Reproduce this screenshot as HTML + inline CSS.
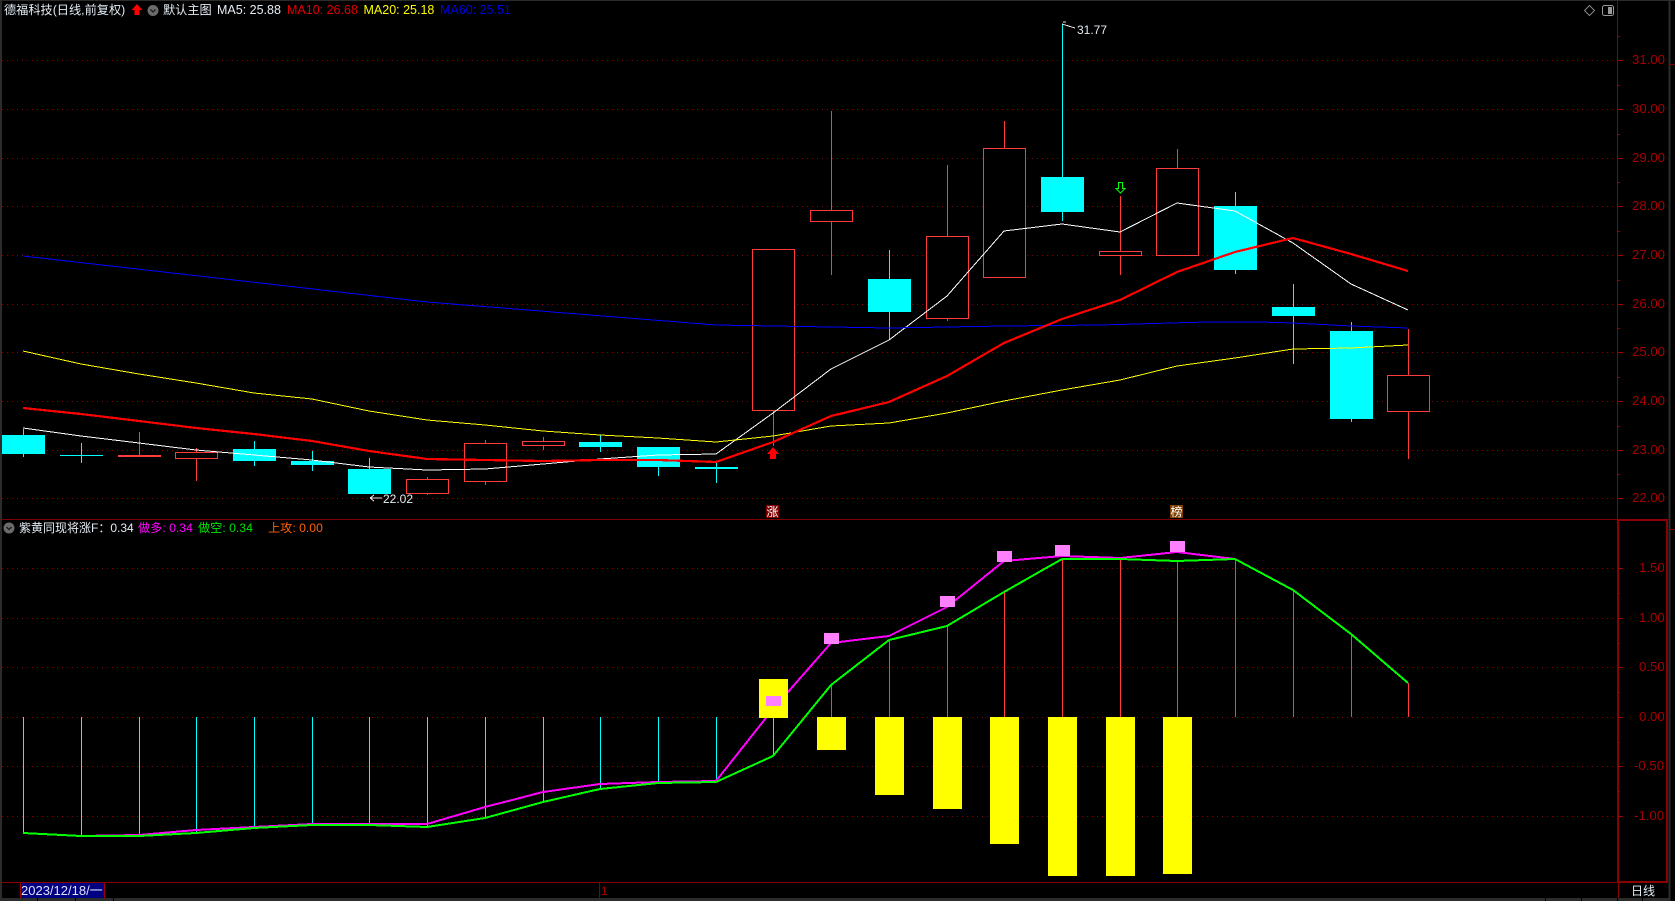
<!DOCTYPE html>
<html><head><meta charset="utf-8"><title>德福科技</title>
<style>
html,body{margin:0;padding:0;background:#000;width:1675px;height:901px;overflow:hidden}
svg{display:block}
text{font-family:"Liberation Sans","Noto Sans CJK SC",sans-serif;font-size:12px}
.ax{font-size:13.2px;fill:#a80000}
.w{fill:#e4edf4}
.h{font-size:12.5px}
</style></head><body>
<svg width="1675" height="901" viewBox="0 0 1675 901" xmlns="http://www.w3.org/2000/svg">
<rect width="1675" height="901" fill="#000"/>
<g shape-rendering="crispEdges" fill="none">
<!-- window edges -->
<path d="M0 0.5H1675" stroke="#2c2c2c"/>
<path d="M1 0V901" stroke="#2c2c2c" stroke-width="2"/>
<path d="M1669.5 0V901" stroke="#2c2c2c" stroke-width="2"/>
<path d="M0 899.5H1670" stroke="#2c2c2c" stroke-width="3"/>
<path d="M37.5 898V901M75.5 898V901M113.5 898V901M1545.5 898V901M1581.5 898V901M1617.5 898V901M1642.5 898V901" stroke="#000"/>
<path d="M1670 64.5H1675M1670 529.5H1675" stroke="#800000"/>
<!-- grid -->
<g stroke="#8b0000" stroke-dasharray="1 4">
<path d="M2 60.5H1617M2 109.5H1617M2 158.5H1617M2 206.5H1617M2 255.5H1617M2 304.5H1617M2 352.5H1617M2 401.5H1617M2 450.5H1617M2 498.5H1617"/>
<path d="M2 568.5H1617M2 618.5H1617M2 667.5H1617M2 717.5H1617M2 766.5H1617M2 816.5H1617"/>
</g>
<!-- frame lines -->
<path d="M1617.5 0V519" stroke="#8b0000"/>
<path d="M2 519.5H1669" stroke="#800000"/>
<path d="M2 882.5H1618" stroke="#8b0000"/>
<rect x="1618" y="520" width="49" height="362" stroke="#8b0000" stroke-width="2"/>
<path d="M1618.5 882V898" stroke="#8b0000"/>
<path d="M1618 60.5H1623M1618 109.5H1623M1618 158.5H1623M1618 206.5H1623M1618 255.5H1623M1618 304.5H1623M1618 352.5H1623M1618 401.5H1623M1618 450.5H1623M1618 498.5H1623" stroke="#a00000"/>
<path d="M1618 85.5H1620M1618 134.5H1620M1618 182.5H1620M1618 231.5H1620M1618 280.5H1620M1618 328.5H1620M1618 377.5H1620M1618 426.5H1620M1618 474.5H1620M1618 36.5H1620" stroke="#a00000"/>
<path d="M1618 568.5H1623M1618 618.5H1623M1618 667.5H1623M1618 717.5H1623M1618 766.5H1623M1618 816.5H1623" stroke="#a00000"/>
<path d="M1618 593.5H1620M1618 643.5H1620M1618 692.5H1620M1618 742.5H1620M1618 791.5H1620" stroke="#a00000"/>
<!-- wicks -->
<path stroke="#00ffff" d="M23.5 429V457M81.5 443V463M254.5 441V466M312.5 451V471M369.5 458V494M600.5 435V452M658.5 447V476M716.5 463V483M889.5 250V340M1062.5 24V221M1235.5 192V274M1293.5 284V364M1351.5 322V422"/>
<path stroke="#ff3c3c" d="M139.5 432V456M196.5 448V481M427.5 477V495M485.5 440V485M543.5 437V450M773.5 249V446M831.5 111V275M947.5 165V321M1004.5 121V277M1120.5 196V275M1177.5 149V256M1408.5 329V459"/>
<!-- cyan bodies -->
<g fill="#00ffff">
<rect x="2" y="435" width="43" height="19"/>
<rect x="60" y="455" width="43" height="1"/>
<rect x="233" y="449" width="43" height="12"/>
<rect x="291" y="461" width="43" height="4"/>
<rect x="348" y="469" width="43" height="25"/>
<rect x="579" y="442" width="43" height="5"/>
<rect x="637" y="447" width="43" height="20"/>
<rect x="695" y="467" width="43" height="2"/>
<rect x="868" y="279" width="43" height="33"/>
<rect x="1041" y="177" width="43" height="35"/>
<rect x="1214" y="206" width="43" height="64"/>
<rect x="1272" y="307" width="43" height="9"/>
<rect x="1330" y="331" width="43" height="88"/>
</g>
<!-- red bodies -->
<g fill="#000" stroke="#ff3c3c">
<rect x="118" y="455" width="43" height="2" fill="#ff3c3c" stroke="none"/>
<rect x="175.500" y="452.500" width="42" height="6"/>
<rect x="406.500" y="479.500" width="42" height="14"/>
<rect x="464.500" y="443.500" width="42" height="38"/>
<rect x="522.500" y="441.500" width="42" height="4"/>
<rect x="752.500" y="249.500" width="42" height="161"/>
<rect x="810.500" y="210.500" width="42" height="11"/>
<rect x="926.500" y="236.500" width="42" height="82"/>
<rect x="983.500" y="148.500" width="42" height="129"/>
<rect x="1099.500" y="251.500" width="42" height="4"/>
<rect x="1156.500" y="168.500" width="42" height="87"/>
<rect x="1387.500" y="375.500" width="42" height="36"/>
</g>
<!-- MAs -->
<polyline stroke="#ffffff" points="23,428 81,436 139,443 196,450 254,455 312,460 369,467 427,470 485,469 543,464 600,459 658,455 716,454 773,413 831,369 889,340 947,296 1004,231 1062,224 1120,232 1177,203 1235,211 1293,243 1351,284 1408,310"/>
<polyline stroke="#ffff00" points="23,351 81,364 139,374 196,383 254,393 312,399 369,411 427,420 485,425 543,431 600,435 658,438 716,442 773,436 831,426 889,423 947,413 1004,401 1062,390 1120,380 1177,366 1235,358 1293,349 1351,348 1408,345"/>
<polyline stroke="#0000ff" points="23,256 427,302 716,325 889,328 1004,326 1100,325 1207,322 1260,322 1293,323 1351,326 1408,328"/>
<polyline stroke="#ff0000" stroke-width="2.200" points="23,408 81,414 139,421 196,428 254,434 312,441 369,451 427,459 485,460 543,461 600,460 658,460 716,462 773,442 831,416 889,402 947,376 1004,343 1062,319 1120,300 1177,272 1235,252 1293,238 1351,254 1408,271"/>
<!-- sub bars -->
<path stroke="#00ffff" d="M23.5 717V833M81.5 717V836M139.5 717V836M196.5 717V833M254.5 717V828M312.5 717V824M369.5 717V824M427.5 717V827M485.5 717V818M543.5 717V801M600.5 717V789M658.5 717V783M716.5 717V782M773.5 717V756"/>
<path stroke="#ff3c3c" d="M831.5 717V685M889.5 717V640M947.5 717V626M1004.5 717V592M1062.5 717V559M1120.5 717V559M1177.5 717V561M1235.5 717V559M1293.5 717V590M1351.5 717V634M1408.5 717V683"/>
<polyline stroke="#ff00ff" stroke-width="2" points="23,833 81,836 139,835 196,830 254,827 312,824 369,824 427,824 485,807 543,792 600,784 658,782 716,781 773,709 831,643 889,636 947,607 1004,561 1062,556 1120,558 1177,552 1235,559"/>
<polyline stroke="#00ff00" stroke-width="2" points="23,833 81,836 139,836 196,833 254,828 312,825 369,825 427,827 485,818 543,802 600,789 658,783 716,782 773,756 831,685 889,640 947,626 1004,592 1062,559 1120,559 1177,561 1235,559 1293,590 1351,634 1408,683"/>
<g fill="#ffff00">
<rect x="759" y="679" width="29" height="39"/>
<rect x="817" y="717" width="29" height="33"/>
<rect x="875" y="717" width="29" height="78"/>
<rect x="933" y="717" width="29" height="92"/>
<rect x="990" y="717" width="29" height="127"/>
<rect x="1048" y="717" width="29" height="159"/>
<rect x="1106" y="717" width="29" height="159"/>
<rect x="1163" y="717" width="29" height="157"/>
</g>
<g fill="#ff80ff">
<rect x="766" y="696" width="15" height="10"/>
<rect x="824" y="633" width="15" height="11"/>
<rect x="940" y="596" width="15" height="11"/>
<rect x="997" y="551" width="15" height="11"/>
<rect x="1055" y="545" width="15" height="11"/>
<rect x="1170" y="541" width="15" height="11"/>
</g>
<!-- markers -->
<rect x="766" y="505" width="13" height="13" fill="#800000"/>
<rect x="1170" y="505" width="13" height="13" fill="#7f3f00"/>
<rect x="20" y="883" width="85" height="15" fill="#000080"/>
<path d="M20.5 883V898M104.5 883V898" stroke="#a00000"/>
<path d="M599.5 883V898" stroke="#800000"/>
<path d="M1062 24L1075 28M1063 22H1066" stroke="#e0e0e0"/>
<path d="M370 498H382M370 498L374 495M370 498L374 501" stroke="#e0e0e0"/>
</g>
<!-- arrows -->
<path d="M773 447L779 454H776V459H770V454H767Z" fill="#ff0000"/>
<path d="M137 4L142.500 10H139.500V15H134.500V10H131.500Z" fill="#ff0000"/>
<path d="M1118.500 182.500H1122.500V188.500H1125L1120.500 193L1116 188.500H1118.500Z" fill="none" stroke="#00ff00"/>
<!-- header icons -->
<circle cx="153" cy="10.500" r="5.500" fill="#6b6b6b"/>
<path d="M150.500 9.500L153 12L155.500 9.500" fill="none" stroke="#1c1c1c" stroke-width="1.300"/>
<circle cx="9" cy="528" r="5.500" fill="#6b6b6b"/>
<path d="M6.500 527L9 529.500L11.500 527" fill="none" stroke="#1c1c1c" stroke-width="1.300"/>
<path d="M1589.500 5.500L1594.500 10.500L1589.500 15.500L1584.500 10.500Z" fill="none" stroke="#888"/>
<rect x="1602.500" y="5.500" width="11" height="10" rx="2" fill="none" stroke="#999"/>
<rect x="1608" y="7" width="4" height="7" fill="#999"/>
<!-- text -->
<text x="4" y="14" class="w" style="font-size:12.2px">德福科技(日线,前复权)</text>
<text x="163" y="14" class="w" style="font-size:12.2px">默认主图</text>
<text x="217" y="14" class="w h">MA5: 25.88</text>
<text x="287" y="14" fill="#e00000" class="h">MA10: 26.68</text>
<text x="363.500" y="14" fill="#ffff00" class="h">MA20: 25.18</text>
<text x="440" y="14" fill="#0000e0" class="h">MA60: 25.51</text>
<text x="19" y="532" class="w">紫黄同现将涨F：0.34</text>
<text x="138" y="532" fill="#ff00ff" style="font-size:12.2px">做多: 0.34</text>
<text x="198" y="532" fill="#00e000" style="font-size:12.2px">做空: 0.34</text>
<text x="268" y="532" fill="#ff6000" style="font-size:12.2px">上攻: 0.00</text>
<text x="1077" y="34" class="w">31.77</text>
<text x="383" y="503" class="w">22.02</text>
<text x="766.500" y="516" fill="#fff">涨</text>
<text x="1170.500" y="516" fill="#fff">榜</text>
<text x="21" y="895" style="font-size:13px" fill="#dfe0ff">2023/12/18/一</text>
<text x="601" y="895" fill="#a00000">1</text>
<text x="1631" y="895" class="w">日线</text>
<g class="ax">
<text x="1632" y="64" class="ax">31.00</text>
<text x="1632" y="113" class="ax">30.00</text>
<text x="1632" y="162" class="ax">29.00</text>
<text x="1632" y="210" class="ax">28.00</text>
<text x="1632" y="259" class="ax">27.00</text>
<text x="1632" y="308" class="ax">26.00</text>
<text x="1632" y="356" class="ax">25.00</text>
<text x="1632" y="405" class="ax">24.00</text>
<text x="1632" y="454" class="ax">23.00</text>
<text x="1632" y="502" class="ax">22.00</text>
<text x="1639" y="572" class="ax">1.50</text>
<text x="1639" y="622" class="ax">1.00</text>
<text x="1639" y="671" class="ax">0.50</text>
<text x="1639" y="721" class="ax">0.00</text>
<text x="1634" y="770" class="ax">-0.50</text>
<text x="1634" y="820" class="ax">-1.00</text>
</g>
</svg>
</body></html>
